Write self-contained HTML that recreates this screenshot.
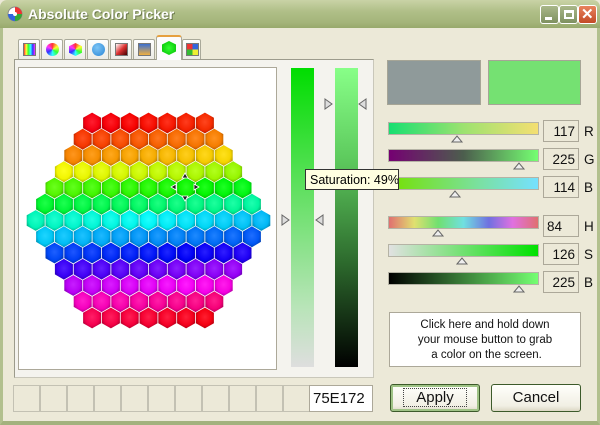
<!DOCTYPE html>
<html><head><meta charset="utf-8">
<style>
*{margin:0;padding:0;box-sizing:border-box}
body{width:600px;height:425px;overflow:hidden;background:#ece9d8;font-family:"Liberation Sans",sans-serif;position:relative}
.a{position:absolute}
#title{left:0;top:0;width:600px;height:28px;background:linear-gradient(#c9d3a6,#b0bf88 40%,#a4b47a 80%,#98a96c);border-radius:7px 7px 0 0}
#title span{position:absolute;left:28px;top:6px;color:#fff;font-weight:bold;font-size:14px;text-shadow:1px 1px 0 #6d7a4f}
.wb{top:5px;width:19px;height:19px;border:1px solid #fff;border-radius:3px;background:linear-gradient(#a9b789,#7f9160)}
#frame{left:0;top:28px;width:600px;height:397px;border:3px solid #b2c08e;border-top:0;border-bottom:4px solid #a3b27e}
.tab{top:39px;width:22px;height:20px;border:1px solid #a9a99a;border-bottom:0;background:linear-gradient(#fff,#ecebe5);border-radius:2px 2px 0 0}
.tab i{position:absolute;left:4px;top:3px;width:13px;height:13px;border:1px solid #777}
#panel{left:14px;top:59px;width:360px;height:319px;border:1px solid #9c9b8c;background:#f4f3ee;border-right-color:#c9c7ba;border-bottom-color:#c9c7ba}
.sl{left:388px;width:151px;height:13px;border:1px solid #b5b3a5}
.val{left:543px;width:36px;height:22px;border:1px solid #aca899;background:#ece9d8;font-size:13.5px;text-align:right;padding:3px 3px 0 0;color:#111}
.lt{left:584px;font-size:13.5px;color:#111}
.cell{top:385px;width:27px;height:27px;border:1px solid #c3c1b3}
.btn{top:384px;width:90px;height:28px;border:1px solid #3c5a2a;border-radius:3px;background:linear-gradient(#fffffb,#f1efe4 80%,#dcd8c4);font-size:15px;text-align:center;line-height:26px;color:#111}
</style></head><body>
<div id="frame" class="a"></div>
<div id="title" class="a"><svg class="a" style="left:7px;top:6px" width="16" height="16" viewBox="0 0 16 16"><circle cx="8" cy="8" r="7" fill="#fff" stroke="#888"/><path d="M8 8L8 1A7 7 0 0 1 15 8Z" fill="#e33"/><path d="M8 8L15 8A7 7 0 0 1 8 15Z" fill="#3a3"/><path d="M8 8L8 15A7 7 0 0 1 1 8Z" fill="#36d"/><circle cx="8" cy="8" r="2" fill="#fff"/></svg><span>Absolute Color Picker</span>
<div class="a wb" style="left:540px"><div class="a" style="left:4px;top:11px;width:7px;height:3px;background:#fff"></div></div>
<div class="a wb" style="left:559px"><div class="a" style="left:4px;top:4px;width:10px;height:9px;border:2px solid #fff;border-top-width:3px"></div></div>
<div class="a wb" style="left:578px;background:linear-gradient(#e8835e,#c34a26)"><div class="a" style="left:2px;top:-1px;color:#fff;font-weight:bold;font-size:15px">✕</div></div>
</div>

<div class="a tab" style="left:18px"><i style="background:linear-gradient(90deg,#f33,#ff3,#3f3,#3ff,#33f,#f3f)"></i></div>
<div class="a tab" style="left:41px"><i style="border-radius:50%;background:conic-gradient(#f33,#ff3,#3f3,#3ff,#33f,#f3f,#f33);border:0"></i></div>
<div class="a tab" style="left:64px"><i style="border:0;clip-path:polygon(50% 0,100% 25%,100% 75%,50% 100%,0 75%,0 25%);background:conic-gradient(#f33,#ff3,#3f3,#3ff,#33f,#f3f,#f33)"></i></div>
<div class="a tab" style="left:87px"><i style="border-radius:50%;border:0;background:radial-gradient(circle at 40% 35%,#7cc4f5,#2a86d6)"></i></div>
<div class="a tab" style="left:110px"><i style="background:linear-gradient(135deg,#fff,#d33 50%,#400)"></i></div>
<div class="a tab" style="left:133px"><i style="background:linear-gradient(#3b6fd0,#f0b040)"></i></div>
<div class="a" style="left:156px;top:35px;width:26px;height:25px;border:1px solid #a9a99a;border-top:2px solid #e6a040;border-bottom:0;background:#fcfcfe;border-radius:3px 3px 0 0;z-index:2"><i class="a" style="left:5px;top:4px;width:14px;height:14px;clip-path:polygon(50% 0,100% 25%,100% 75%,50% 100%,0 75%,0 25%);background:radial-gradient(#3f3,#0b0)"></i></div>
<div class="a tab" style="left:182px;width:19px"><i style="left:3px;background:conic-gradient(#36d 0 25%,#ee3 0 50%,#3b3 0 75%,#e33 0)"></i></div>

<div id="panel" class="a"></div>
<div class="a" style="left:18px;top:67px;width:259px;height:303px;background:#fff;border:1px solid #aca899"></div>
<svg id="hex" class="a" style="left:0;top:0" width="300" height="380"></svg>

<div class="a" style="left:291px;top:68px;width:23px;height:299px;background:linear-gradient(#00dd00,#5fe05f 40%,#b8e4b8 80%,#dedede)"></div>
<div class="a" style="left:335px;top:68px;width:23px;height:299px;background:linear-gradient(#88ff88,#5ecb5e 30%,#2d6a2d 65%,#000)"></div>
<svg class="a" style="left:324px;top:98px" width="44" height="12"><path d="M1 1L8 6L1 11Z" fill="#ddd" stroke="#666"/><path d="M42 1L35 6L42 11Z" fill="#ddd" stroke="#666"/></svg>
<svg class="a" style="left:281px;top:214px" width="44" height="12"><path d="M1 1L8 6L1 11Z" fill="#ddd" stroke="#666"/><path d="M42 1L35 6L42 11Z" fill="#ddd" stroke="#666"/></svg>
<div class="a" style="left:305px;top:169px;width:94px;height:21px;background:#ffffe1;border:1px solid #333;font-size:12.5px;padding:3px 0 0 4px;z-index:3;white-space:nowrap;overflow:hidden">Saturation: 49%</div>

<div class="a" style="left:387px;top:60px;width:94px;height:45px;background:#8f9a9a;border:1px solid #a6a596"></div>
<div class="a" style="left:488px;top:60px;width:93px;height:45px;background:#75e172;border:1px solid #a6a596"></div>

<div class="a sl" style="top:122px;background:linear-gradient(90deg,#17df71,#9de270 50%,#f4df72)"></div>
<div class="a sl" style="top:149px;background:linear-gradient(90deg,#750072,#4c5e4d 50%,#75ff72)"></div>
<div class="a sl" style="top:177px;background:linear-gradient(90deg,#75e100,#7ae1a0 60%,#75e1ff)"></div>
<div class="a sl" style="top:216px;background:linear-gradient(90deg,#e07070,#e0e070 17%,#70e070 33%,#70e0e0 50%,#7070e0 67%,#e070e0 83%,#e07070)"></div>
<div class="a sl" style="top:244px;background:linear-gradient(90deg,#e1e1e1,#00e100)"></div>
<div class="a sl" style="top:272px;background:linear-gradient(90deg,#000,#75ff72)"></div>
<svg class="a" style="left:380px;top:130px" width="160" height="170">
<g fill="#eee" stroke="#666"><path d="M72 12L77 6L82 12Z"/><path d="M134 39L139 33L144 39Z"/><path d="M70 67L75 61L80 67Z"/><path d="M53 106L58 100L63 106Z"/><path d="M77 134L82 128L87 134Z"/><path d="M134 162L139 156L144 162Z"/></g></svg>
<div class="a val" style="top:120px">117</div><div class="a lt" style="top:124px">R</div>
<div class="a val" style="top:148px">225</div><div class="a lt" style="top:152px">G</div>
<div class="a val" style="top:176px">114</div><div class="a lt" style="top:180px">B</div>
<div class="a val" style="top:215px;text-align:left;padding-left:3px">84</div><div class="a lt" style="top:219px">H</div>
<div class="a val" style="top:243px">126</div><div class="a lt" style="top:247px">S</div>
<div class="a val" style="top:271px">225</div><div class="a lt" style="top:275px">B</div>

<div class="a" style="left:389px;top:312px;width:192px;height:55px;background:#fff;border:1px solid #aca899;font-size:11.5px;text-align:center;line-height:15px;padding-top:5px;color:#111">Click here and hold down<br>your mouse button to grab<br>&nbsp;a color on the screen.</div>

<div id="cells"></div>
<div class="a" style="left:309px;top:385px;width:64px;height:27px;background:#fff;border:1px solid #aca899;font-size:15px;padding:4px 0 0 3px;color:#111">75E172</div>
<div class="a btn" style="left:390px;box-shadow:inset 0 0 0 2px #9fc386"><span style="border:1px dotted #444;padding:0 12px">Apply</span></div>
<div class="a btn" style="left:491px">Cancel</div>

<script>
var c='';for(var i=0;i<11;i++)c+='<div class="a cell" style="left:'+(13+i*27)+'px"></div>';
document.getElementById('cells').innerHTML=c;
var hues=[3,22,42,72,112,145,180,205,235,265,295,322,348];
var s='<defs>';
var out='';
var R=10.4;
for(var r=0;r<13;r++){
 var n=7+Math.min(r,12-r);
 var y=123+r*16.25;
 for(var j=0;j<n;j++){
  var x=148.5+(j-(n-1)/2)*18.8;
  var h=hues[r]+(j-(n-1)/2)*2.5;
  var id='g'+r+'_'+j;
  s+='<radialGradient id="'+id+'" cx="50%" cy="45%" r="60%"><stop offset="0" stop-color="hsl('+h+',100%,56%)"/><stop offset="0.65" stop-color="hsl('+h+',100%,48%)"/><stop offset="1" stop-color="hsl('+h+',100%,33%)"/></radialGradient>';
  var p='';
  for(var k=0;k<6;k++){var a=Math.PI/180*(60*k-90);p+=(x+R*Math.cos(a)).toFixed(1)+','+(y+R*Math.sin(a)).toFixed(1)+' ';}
  out+='<polygon points="'+p+'" fill="url(#'+id+')"/>';
 }
}
s+='</defs>';
out+='<g fill="#222" stroke="#fff" stroke-width="0.8"><path d="M185 173L182 178L188 178Z"/><path d="M185 201L182 196L188 196Z"/><path d="M171 187L176 184L176 190Z"/><path d="M199 187L194 184L194 190Z"/></g>';
document.getElementById('hex').innerHTML=s+out;
</script>
</body></html>
